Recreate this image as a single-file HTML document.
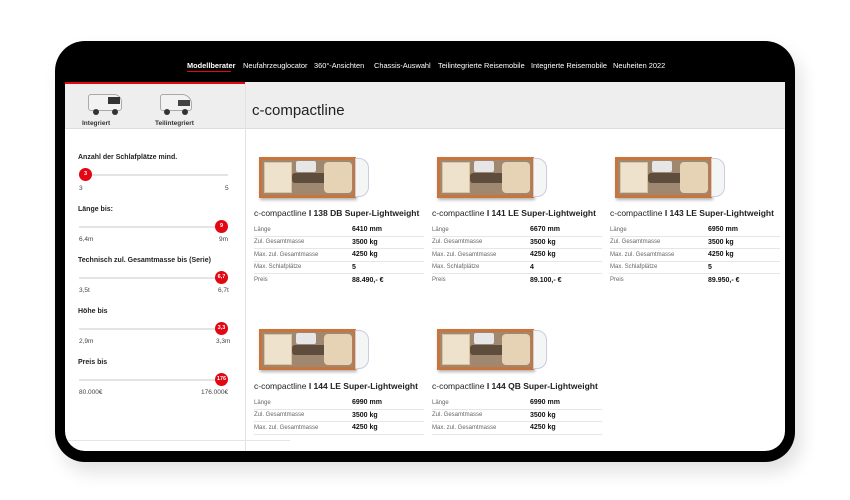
<!DOCTYPE html>
<html><head><meta charset="utf-8"><style>
*{margin:0;padding:0;box-sizing:border-box}
body{width:850px;height:500px;background:#fff;font-family:"Liberation Sans",sans-serif;position:relative;overflow:hidden;color:#222}
.a{position:absolute}
.dev{left:55px;top:41px;width:740px;height:421px;background:#000;border-radius:30px;box-shadow:6px 10px 18px rgba(0,0,0,.12)}
.scr{left:65px;top:82px;width:720px;height:369px;background:#fff;border-radius:0 0 20px 20px;overflow:hidden}
.nav{font-size:7.4px;color:#fff;top:61px}
.t{font-size:6.5px;color:#444;white-space:nowrap}
.lab{font-size:7px;color:#222;font-weight:bold;left:78px}
.trk{left:79px;width:149px;height:2px;background:#e4e4e4}
.kn{width:13px;height:13px;border-radius:50%;background:#e30613;color:#fff;font-size:5.5px;font-weight:bold;text-align:center;line-height:13px}
.card{width:170px}
.card h3{font-size:8.5px;font-weight:normal;white-space:nowrap;margin-top:0}
.card h3 b{font-weight:bold}
.row{display:flex;height:12.5px;border-bottom:1px solid #e6e6e6;font-size:6px;color:#666;align-items:center}
.row span:first-child{width:98px}
.row span:last-child{font-weight:bold;color:#111;font-size:7px}
.fp{position:absolute;width:112px;height:48px}
.fp .b{position:absolute;left:0;top:4px;width:97px;height:41px;background:#c7753d;box-shadow:1px 2px 3px rgba(0,0,0,.3)}
.fp .in{position:absolute;left:3px;top:3px;width:91px;height:35px;background:#a08870}
.fp .ai{position:absolute;left:30px;top:13px;width:45px;height:10px;background:#5e4c3c;border-radius:3px}
.fp .bd{position:absolute;left:2px;top:2px;width:28px;height:31px;background:#efe2cc;border:1px solid #d8c3a3}
.fp .se{position:absolute;left:62px;top:2px;width:28px;height:31px;background:#e6d3b5;border-radius:4px}
.fp .wc{position:absolute;left:34px;top:1px;width:20px;height:11px;background:#e6e6e6;border-radius:2px}
.fp .cab{position:absolute;left:96px;top:5px;width:14px;height:39px;background:#f4f6f6;border-radius:0 10px 10px 0;border:1px solid #ccd}
</style></head><body>
<div class="a dev"></div>
<div class="a scr">
 <div class="a" style="left:0;top:0;width:180px;height:2px;background:#e30613"></div>
 <div class="a" style="left:0;top:2px;width:180px;height:45px;background:#eeeeee;border-bottom:1px solid #ddd"></div>
 <div class="a" style="left:181px;top:0;width:539px;height:47px;background:#eeeeee;border-bottom:1px solid #ddd"></div>
 <div class="a" style="left:180px;top:0;width:1px;height:369px;background:#e2e2e2"></div>
 <div class="a" style="left:187px;top:20px;font-size:15px;color:#222">c-compactline</div>
 <div class="a" style="left:0;top:358px;width:225px;height:1px;background:#e4e4e4"></div>
</div>
<div class="a nav" style="left:187px;font-weight:bold">Modellberater</div>
<div class="a" style="left:187px;top:71px;width:44px;height:1px;background:#e30613"></div>
<div class="a nav" style="left:243px">Neufahrzeuglocator</div>
<div class="a nav" style="left:314px">360°-Ansichten</div>
<div class="a nav" style="left:374px">Chassis-Auswahl</div>
<div class="a nav" style="left:438px">Teilintegrierte Reisemobile</div>
<div class="a nav" style="left:531px">Integrierte Reisemobile</div>
<div class="a nav" style="left:613px">Neuheiten 2022</div>

<div class="a" style="left:88px;top:94px;width:34px;height:17px;background:#f2f2f2;border:1px solid #aaa;border-radius:3px 8px 3px 3px"></div>
<div class="a" style="left:108px;top:97px;width:12px;height:7px;background:#333"></div>
<div class="a" style="left:93px;top:109px;width:6px;height:6px;border-radius:50%;background:#333"></div>
<div class="a" style="left:112px;top:109px;width:6px;height:6px;border-radius:50%;background:#333"></div>
<div class="a" style="left:160px;top:94px;width:32px;height:17px;background:#f2f2f2;border:1px solid #aaa;border-radius:3px 10px 3px 3px"></div>
<div class="a" style="left:178px;top:100px;width:12px;height:6px;background:#444"></div>
<div class="a" style="left:164px;top:109px;width:6px;height:6px;border-radius:50%;background:#333"></div>
<div class="a" style="left:182px;top:109px;width:6px;height:6px;border-radius:50%;background:#333"></div>
<div class="a" style="left:82px;top:120px;font-size:6.5px;font-weight:bold;color:#333">Integriert</div>
<div class="a" style="left:155px;top:120px;font-size:6.5px;font-weight:bold;color:#333">Teilintegriert</div>

<div class="a lab" style="top:154px">Anzahl der Schlafplätze mind.</div>
<div class="a trk" style="top:174px"></div><div class="a kn" style="left:79px;top:168px">3</div>
<div class="a t" style="left:79px;top:185px">3</div><div class="a t" style="left:225px;top:185px">5</div>
<div class="a lab" style="top:206px">Länge bis:</div>
<div class="a trk" style="top:226px"></div><div class="a kn" style="left:215px;top:220px">9</div>
<div class="a t" style="left:79px;top:236px">6,4m</div><div class="a t" style="left:219px;top:236px">9m</div>
<div class="a lab" style="top:257px">Technisch zul. Gesamtmasse bis (Serie)</div>
<div class="a trk" style="top:277px"></div><div class="a kn" style="left:215px;top:271px">6,7</div>
<div class="a t" style="left:79px;top:287px">3,5t</div><div class="a t" style="left:218px;top:287px">6,7t</div>
<div class="a lab" style="top:308px">Höhe bis</div>
<div class="a trk" style="top:328px"></div><div class="a kn" style="left:215px;top:322px">3,3</div>
<div class="a t" style="left:79px;top:338px">2,9m</div><div class="a t" style="left:216px;top:338px">3,3m</div>
<div class="a lab" style="top:359px">Preis bis</div>
<div class="a trk" style="top:379px"></div><div class="a kn" style="left:215px;top:373px">176</div>
<div class="a t" style="left:79px;top:389px">80.000€</div><div class="a t" style="left:201px;top:389px">176.000€</div>

<div class="fp" style="left:259px;top:153px"><div class="b"><div class="in"><div class="bd"></div><div class="ai"></div><div class="wc"></div><div class="se"></div></div></div><div class="cab"></div></div>
<div class="fp" style="left:437px;top:153px"><div class="b"><div class="in"><div class="bd"></div><div class="ai"></div><div class="wc"></div><div class="se"></div></div></div><div class="cab"></div></div>
<div class="fp" style="left:615px;top:153px"><div class="b"><div class="in"><div class="bd"></div><div class="ai"></div><div class="wc"></div><div class="se"></div></div></div><div class="cab"></div></div>
<div class="fp" style="left:259px;top:325px"><div class="b"><div class="in"><div class="bd"></div><div class="ai"></div><div class="wc"></div><div class="se"></div></div></div><div class="cab"></div></div>
<div class="fp" style="left:437px;top:325px"><div class="b"><div class="in"><div class="bd"></div><div class="ai"></div><div class="wc"></div><div class="se"></div></div></div><div class="cab"></div></div>

<div class="a card" style="left:254px;top:208px"><h3>c-compactline <b>I 138 DB Super-Lightweight</b></h3>
<div style="margin-top:6px"><div class="row"><span>Länge</span><span>6410 mm</span></div><div class="row"><span>Zul. Gesamtmasse</span><span>3500 kg</span></div><div class="row"><span>Max. zul. Gesamtmasse</span><span>4250 kg</span></div><div class="row"><span>Max. Schlafplätze</span><span>5</span></div><div class="row" style="border:0"><span>Preis</span><span>88.490,- €</span></div></div></div>
<div class="a card" style="left:432px;top:208px"><h3>c-compactline <b>I 141 LE Super-Lightweight</b></h3>
<div style="margin-top:6px"><div class="row"><span>Länge</span><span>6670 mm</span></div><div class="row"><span>Zul. Gesamtmasse</span><span>3500 kg</span></div><div class="row"><span>Max. zul. Gesamtmasse</span><span>4250 kg</span></div><div class="row"><span>Max. Schlafplätze</span><span>4</span></div><div class="row" style="border:0"><span>Preis</span><span>89.100,- €</span></div></div></div>
<div class="a card" style="left:610px;top:208px"><h3>c-compactline <b>I 143 LE Super-Lightweight</b></h3>
<div style="margin-top:6px"><div class="row"><span>Länge</span><span>6950 mm</span></div><div class="row"><span>Zul. Gesamtmasse</span><span>3500 kg</span></div><div class="row"><span>Max. zul. Gesamtmasse</span><span>4250 kg</span></div><div class="row"><span>Max. Schlafplätze</span><span>5</span></div><div class="row" style="border:0"><span>Preis</span><span>89.950,- €</span></div></div></div>
<div class="a card" style="left:254px;top:381px"><h3>c-compactline <b>I 144 LE Super-Lightweight</b></h3>
<div style="margin-top:6px"><div class="row"><span>Länge</span><span>6990 mm</span></div><div class="row"><span>Zul. Gesamtmasse</span><span>3500 kg</span></div><div class="row"><span>Max. zul. Gesamtmasse</span><span>4250 kg</span></div></div></div>
<div class="a card" style="left:432px;top:381px"><h3>c-compactline <b>I 144 QB Super-Lightweight</b></h3>
<div style="margin-top:6px"><div class="row"><span>Länge</span><span>6990 mm</span></div><div class="row"><span>Zul. Gesamtmasse</span><span>3500 kg</span></div><div class="row"><span>Max. zul. Gesamtmasse</span><span>4250 kg</span></div></div></div>
</body></html>
